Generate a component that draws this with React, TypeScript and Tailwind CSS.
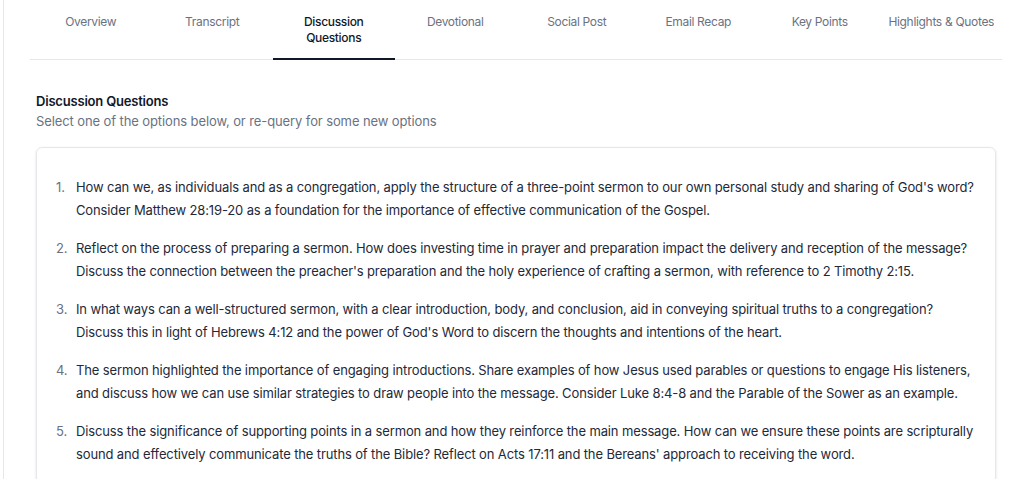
import React from "react";

const tabs = [
  "Overview",
  "Transcript",
  "Discussion Questions",
  "Devotional",
  "Social Post",
  "Email Recap",
  "Key Points",
  "Highlights & Quotes",
];

const questions = [
  [
    "How can we, as individuals and as a congregation, apply the structure of a three-point sermon to our own personal study and sharing of God's word?",
    "Consider Matthew 28:19-20 as a foundation for the importance of effective communication of the Gospel.",
  ],
  [
    "Reflect on the process of preparing a sermon. How does investing time in prayer and preparation impact the delivery and reception of the message?",
    "Discuss the connection between the preacher's preparation and the holy experience of crafting a sermon, with reference to 2 Timothy 2:15.",
  ],
  [
    "In what ways can a well-structured sermon, with a clear introduction, body, and conclusion, aid in conveying spiritual truths to a congregation?",
    "Discuss this in light of Hebrews 4:12 and the power of God's Word to discern the thoughts and intentions of the heart.",
  ],
  [
    "The sermon highlighted the importance of engaging introductions. Share examples of how Jesus used parables or questions to engage His listeners,",
    "and discuss how we can use similar strategies to draw people into the message. Consider Luke 8:4-8 and the Parable of the Sower as an example.",
  ],
  [
    "Discuss the significance of supporting points in a sermon and how they reinforce the main message. How can we ensure these points are scripturally",
    "sound and effectively communicate the truths of the Bible? Reflect on Acts 17:11 and the Bereans' approach to receiving the word.",
  ],
];

export default function App() {
  return (
    <div
      className="h-[479px] overflow-hidden bg-white"
      style={{ fontFamily: "Inter, 'Noto Sans', sans-serif" }}
    >
      <div className="ml-[3px] h-full border-l border-gray-200 pl-[26px] pr-[22px]">
        {/* tabs */}
        <div className="flex border-b border-gray-200 tracking-[-0.02em]">
          {tabs.map((tab) => {
            const active = tab === "Discussion Questions";
            return (
              <div
                key={tab}
                className={
                  active
                    ? "flex-1 -mb-px border-b-2 border-gray-900 pt-[14px] pb-[12px] text-center text-xs leading-4 font-medium text-gray-900"
                    : "flex-1 pt-[14px] text-center text-xs leading-4 text-gray-500"
                }
              >
                {active ? (
                  <>
                    Discussion
                    <br />
                    Questions
                  </>
                ) : (
                  tab
                )}
              </div>
            );
          })}
        </div>

        {/* content */}
        <div className="px-[6px] pt-[31px]">
          <div className="text-[13px] leading-5 font-semibold tracking-[-0.015em] text-gray-900">
            Discussion Questions
          </div>
          <div className="text-[13px] leading-5 tracking-[-0.008em] text-gray-500">
            Select one of the options below, or re-query for some new options
          </div>
          <div className="mt-[16px] rounded-md border border-gray-200 shadow-sm pl-[19px] pr-3 pt-[28px] pb-4">
            <ol className="flex flex-col gap-[15px] tracking-[-0.008em]">
              {questions.map((q, i) => (
                <li key={i} className="flex text-[13px] leading-[23px] text-gray-800">
                  <span className="w-[20px] shrink-0 text-gray-500">{i + 1}.</span>
                  <span>
                    {q[0]}
                    <br />
                    {q[1]}
                  </span>
                </li>
              ))}
            </ol>
          </div>
        </div>
      </div>
    </div>
  );
}
